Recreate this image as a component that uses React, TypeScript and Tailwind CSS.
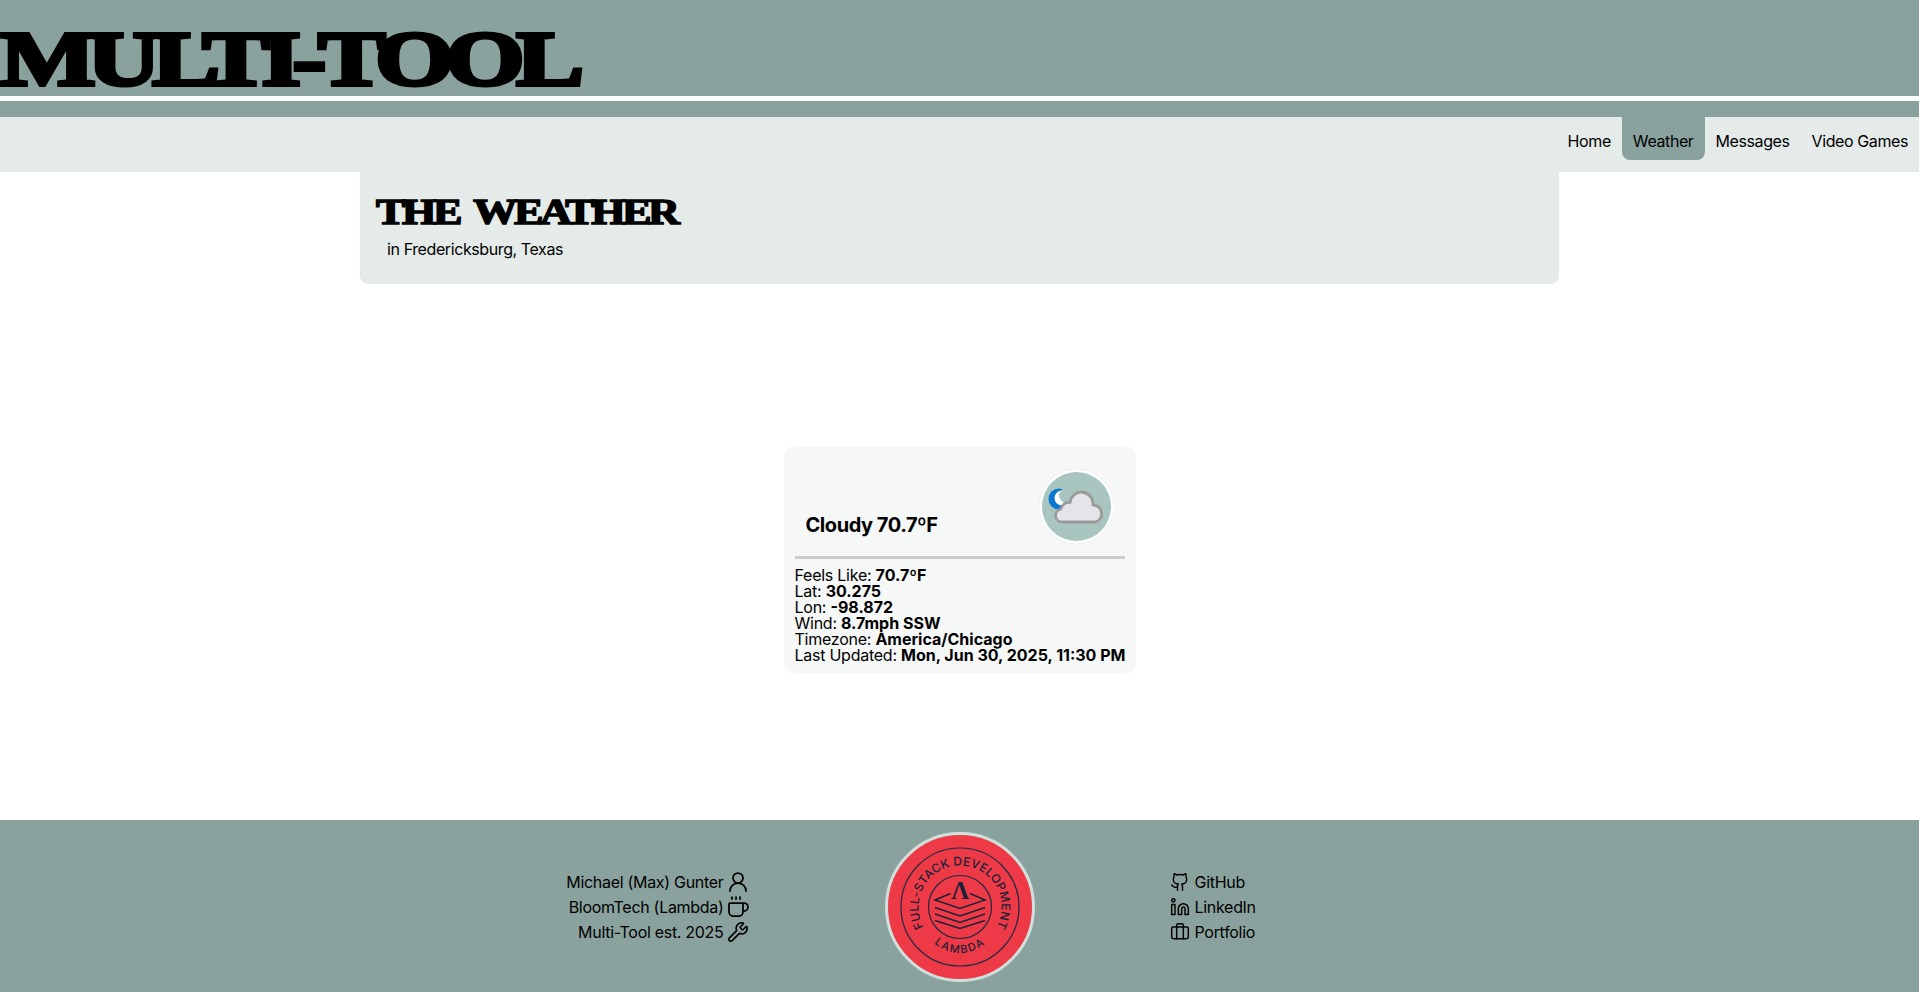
import { Briefcase, Coffee, Github, Linkedin, UserRound, Wrench } from "lucide-react";

const navItems = ["Home", "Weather", "Messages", "Video Games"];

const details = [
  ["Feels Like", "70.7ºF"],
  ["Lat", "30.275"],
  ["Lon", "-98.872"],
  ["Wind", "8.7mph SSW"],
  ["Timezone", "America/Chicago"],
  ["Last Updated", "Mon, Jun 30, 2025, 11:30 PM"],
];

function WeatherIcon() {
  return (
    <div className="h-[75px] w-[75px] shrink-0 rounded-full bg-[#a8c5c0] ring-[3px] ring-inset ring-white">
      <svg viewBox="0 0 75 75" className="block h-full w-full">
        <circle cx="20" cy="30" r="10.5" fill="#0a78d2" />
        <circle cx="23" cy="29" r="7.5" fill="#ffffff" />
        <circle cx="27.5" cy="26.5" r="7.5" fill="#a8c5c0" />
        <path
          d="M23 53a6.5 6.5 0 0 1-1-12.9 8 8 0 0 1 9-6.6A11.5 11.5 0 0 1 54 36a8.8 8.8 0 0 1 3 17z"
          fill="#e4e4e9"
          stroke="#9a9a9a"
          strokeWidth="2.8"
          strokeLinejoin="round"
        />
      </svg>
    </div>
  );
}

function LambdaBadge() {
  return (
    <svg viewBox="0 0 150 150" className="block h-[150px] w-[150px] shrink-0">
      <defs>
        <path id="badge-top" d="M 54.25 110.94 A 41.5 41.5 0 1 1 95.75 110.94" />
        <path id="badge-bottom" d="M 33 75 A 42 46 0 0 0 117 75" />
      </defs>
      <circle cx="75" cy="75" r="73.5" fill="#ee3a46" stroke="#cfe0dc" strokeWidth="3" />
      <g fill="none" stroke="#1f2a44" strokeWidth="1.2">
        <circle cx="75" cy="75" r="59" />
        <circle cx="75" cy="75" r="31.5" />
      </g>
      <text fill="#1b2238" fontFamily="Inter, sans-serif" fontWeight="500" fontSize="12" letterSpacing="0.2">
        <textPath href="#badge-top" startOffset="50%" textAnchor="middle">
          FULL-STACK DEVELOPMENT
        </textPath>
      </text>
      <text fill="#1b2238" fontFamily="Inter, sans-serif" fontWeight="500" fontSize="11" letterSpacing="1.6">
        <textPath href="#badge-bottom" startOffset="50%" textAnchor="middle">
          LAMBDA
        </textPath>
      </text>
      <text
        x="75"
        y="66.5"
        fill="#1b2238"
        textAnchor="middle"
        fontFamily="Liberation Serif, serif"
        fontWeight="700"
        fontSize="25"
      >
        Λ
      </text>
      <g fill="none" stroke="#1b2238" strokeWidth="1.5">
        <path d="M65.5 61.5 50 68 75 76.5 100 68 85 61.5" />
        <path d="M50 75.5 75 84 100 75.5" />
        <path d="M50 82 75 90.5 100 82" />
        <path d="M50 88.5 75 96.5 100 88.5" />
      </g>
    </svg>
  );
}

export default function App() {
  return (
    <div className="flex h-[992px] flex-col overflow-hidden bg-white text-black [font-family:Inter,sans-serif]">
      <header className="h-[96px] bg-[#8aa29e] pt-[19px]">
        <h1 className="origin-left scale-x-[1.283] text-[79px] leading-[80px] font-bold tracking-[-6.5px] whitespace-nowrap [-webkit-text-stroke:4px_#000] [font-family:'Liberation_Serif',serif]">
          MULTI-TOOL
        </h1>
      </header>
      <div className="mt-[5px] h-[16px] bg-[#8aa29e]" />
      <nav className="flex h-[55px] justify-end bg-[#e5ebe9] tracking-[-0.4px]">
        {navItems.map((item) => (
          <a
            key={item}
            className={
              item === "Weather"
                ? "flex h-[43px] items-center rounded-b-lg bg-[#8aa29e] px-[11px] pt-[5px] text-base"
                : "flex h-[43px] items-center px-[11px] pt-[5px] text-base"
            }
          >
            {item}
          </a>
        ))}
      </nav>
      <section className="mx-auto h-[112px] w-[1199px] rounded-b-lg bg-[#e5ebe9] pt-[22px] pl-[16px]">
        <h2 className="origin-left scale-x-[1.26] text-[35px] leading-[38px] font-bold tracking-[-2.7px] whitespace-pre [-webkit-text-stroke:1.5px_#000] [word-spacing:6px] [font-family:'Liberation_Serif',serif]">
          THE WEATHER
        </h2>
        <p className="mt-[5px] pl-[11px] text-base tracking-[-0.4px]">in Fredericksburg, Texas</p>
      </section>
      <main className="flex flex-1 items-center justify-center pt-[15px]">
        <div className="w-[352px] rounded-xl bg-[#f6f8f7] px-[11px] pt-[23px] pb-[11px]">
          <div className="flex items-end justify-between pr-[11px] pl-[11px]">
            <div className="pb-[5px] text-xl leading-7 font-bold tracking-[-0.45px]">Cloudy 70.7ºF</div>
            <WeatherIcon />
          </div>
          <div className="mt-[12px] mb-[8px] h-[3px] bg-[#cccccc]" />
          {details.map(([label, value]) => (
            <div key={label} className="text-base leading-4 tracking-[-0.25px] whitespace-nowrap">
              {label}: <b className="font-bold tracking-normal">{value}</b>
            </div>
          ))}
        </div>
      </main>
      <footer className="flex h-[172px] items-start justify-center gap-[135px] bg-[#8aa29e] pt-[12px] tracking-[-0.3px]">
        <div className="mt-[40px] flex w-[200px] flex-col items-end gap-[5px] text-base leading-5">
          <div className="flex items-center gap-[2px]">
            Michael (Max) Gunter <UserRound size={24} strokeWidth={1.75} className="-my-0.5" />
          </div>
          <div className="flex items-center gap-[2px]">
            BloomTech (Lambda) <Coffee size={24} strokeWidth={1.75} className="-my-0.5" />
          </div>
          <div className="flex items-center gap-[3px] pr-px">
            Multi-Tool est. 2025 <Wrench size={22} strokeWidth={1.75} className="-my-px" />
          </div>
        </div>
        <LambdaBadge />
        <div className="mt-[40px] flex w-[200px] flex-col items-start gap-[5px] text-base leading-5">
          <div className="flex items-center gap-[5px]">
            <Github size={20} strokeWidth={1.75} /> GitHub
          </div>
          <div className="flex items-center gap-[5px]">
            <Linkedin size={20} strokeWidth={1.75} /> LinkedIn
          </div>
          <div className="flex items-center gap-[5px]">
            <Briefcase size={20} strokeWidth={1.75} /> Portfolio
          </div>
        </div>
      </footer>
    </div>
  );
}
